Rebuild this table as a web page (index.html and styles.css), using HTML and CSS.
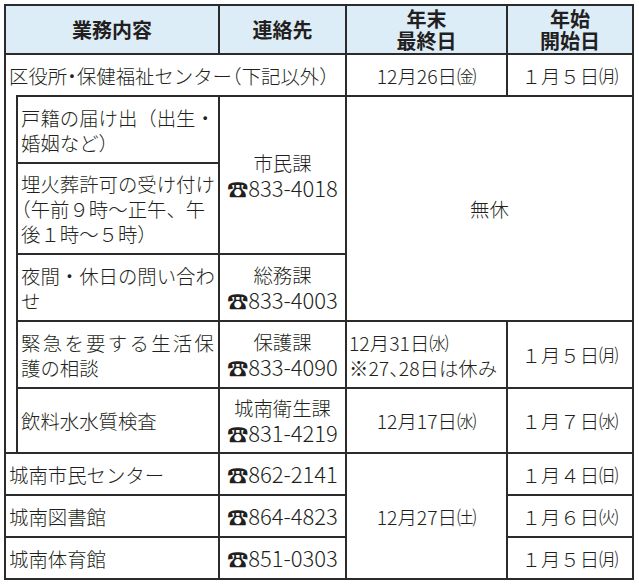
FILE: index.html
```html
<!DOCTYPE html>
<html lang="ja">
<head>
<meta charset="utf-8">
<link rel="stylesheet" href="styles.css">
</head>
<body>
<table class="schedule">
  <colgroup>
    <col class="c-indent">
    <col class="c-task">
    <col class="c-contact">
    <col class="c-end">
    <col class="c-start">
  </colgroup>
  <thead>
    <tr class="r-head">
      <th colspan="2">業務内容</th>
      <th>連絡先</th>
      <th>年末<br>最終日</th>
      <th>年始<br>開始日</th>
    </tr>
  </thead>
  <tbody>
    <tr class="r-1">
      <td colspan="3" class="task">区役所<span class="ha">・</span>保健福祉センター<span class="ha">（</span>下記以外）</td>
      <td class="date">12月26日㈮</td>
      <td class="date">１月５日㈪</td>
    </tr>
    <tr class="r-2">
      <td rowspan="5" class="indent"></td>
      <td class="task">戸籍の届け出（出生・婚姻など）</td>
      <td rowspan="2" class="contact">市民課<br><span class="tel"><span class="ico">☎</span>833-4018</span></td>
      <td rowspan="3" colspan="2" class="closed">無休</td>
    </tr>
    <tr class="r-3">
      <td class="task">埋火葬許可の受け付け<span class="ha">（</span>午前９時～正午、午後１時～５時）</td>
    </tr>
    <tr class="r-2">
      <td class="task">夜間・休日の問い合わせ</td>
      <td class="contact">総務課<br><span class="tel"><span class="ico">☎</span>833-4003</span></td>
    </tr>
    <tr class="r-2">
      <td class="task"><span class="spread">緊急を要する生活保</span><br>護の相談</td>
      <td class="contact">保護課<br><span class="tel"><span class="ico">☎</span>833-4090</span></td>
      <td class="note">12月31日㈬<br>※27<span class="ha">、</span>28日は休み</td>
      <td class="date">１月５日㈪</td>
    </tr>
    <tr class="r-2b">
      <td class="task">飲料水水質検査</td>
      <td class="contact">城南衛生課<br><span class="tel"><span class="ico">☎</span>831-4219</span></td>
      <td class="date">12月17日㈬</td>
      <td class="date">１月７日㈬</td>
    </tr>
    <tr class="r-1">
      <td colspan="2" class="task">城南市民センター</td>
      <td class="contact"><span class="tel"><span class="ico">☎</span>862-2141</span></td>
      <td rowspan="3" class="date">12月27日㈯</td>
      <td class="date">１月４日㈰</td>
    </tr>
    <tr class="r-1">
      <td colspan="2" class="task">城南図書館</td>
      <td class="contact"><span class="tel"><span class="ico">☎</span>864-4823</span></td>
      <td class="date">１月６日㈫</td>
    </tr>
    <tr class="r-1">
      <td colspan="2" class="task">城南体育館</td>
      <td class="contact"><span class="tel"><span class="ico">☎</span>851-0303</span></td>
      <td class="date">１月５日㈪</td>
    </tr>
  </tbody>
</table>
</body>
</html>
```
FILE: styles.css
```css
html, body {
  margin: 0;
  padding: 0;
  background: #ffffff;
}
body {
  padding: 4px 0 0 4px;
  font-family: "Noto Sans CJK JP", "Noto Sans", sans-serif;
  color: #231f20;
}
.schedule {
  border-collapse: collapse;
  table-layout: fixed;
  width: 630px;
  font-size: 19.4px;
  font-weight: 300;
  line-height: 25px;
}
.c-indent { width: 12px; }
.c-task { width: 202px; }
.c-contact { width: 127px; }
.c-end { width: 161px; }
.c-start { width: 126px; }

.schedule th,
.schedule td {
  border: 2px solid #2b2b2b;
  padding: 0 0 0 3px;
  vertical-align: middle;
}
.schedule th {
  background: #dcedf8;
  font-weight: 700;
  font-size: 20px;
  line-height: 22px;
  text-align: center;
  padding: 0;
}
.r-head { height: 49px; }
.r-1 { height: 42px; }
.r-2 { height: 67px; }
.r-2b { height: 65px; }
.r-3 { height: 91px; }

.schedule td.indent {
  border-top: hidden;
  padding: 0;
}
.task {
  text-align: left;
}
.spread {
  letter-spacing: 2.3px;
}
.ha {
  font-feature-settings: "halt";
}
.schedule td.contact {
  text-align: center;
  white-space: nowrap;
  padding: 0;
}
.tel {
  font-size: 22px;
}
.ico {
  font-size: 21px;
}
.schedule td.date {
  text-align: center;
  white-space: nowrap;
  padding: 0;
}
.schedule td.note {
  text-align: left;
  white-space: nowrap;
  padding: 0 0 0 2px;
}
.schedule td.closed {
  text-align: center;
  padding: 0;
}
```
